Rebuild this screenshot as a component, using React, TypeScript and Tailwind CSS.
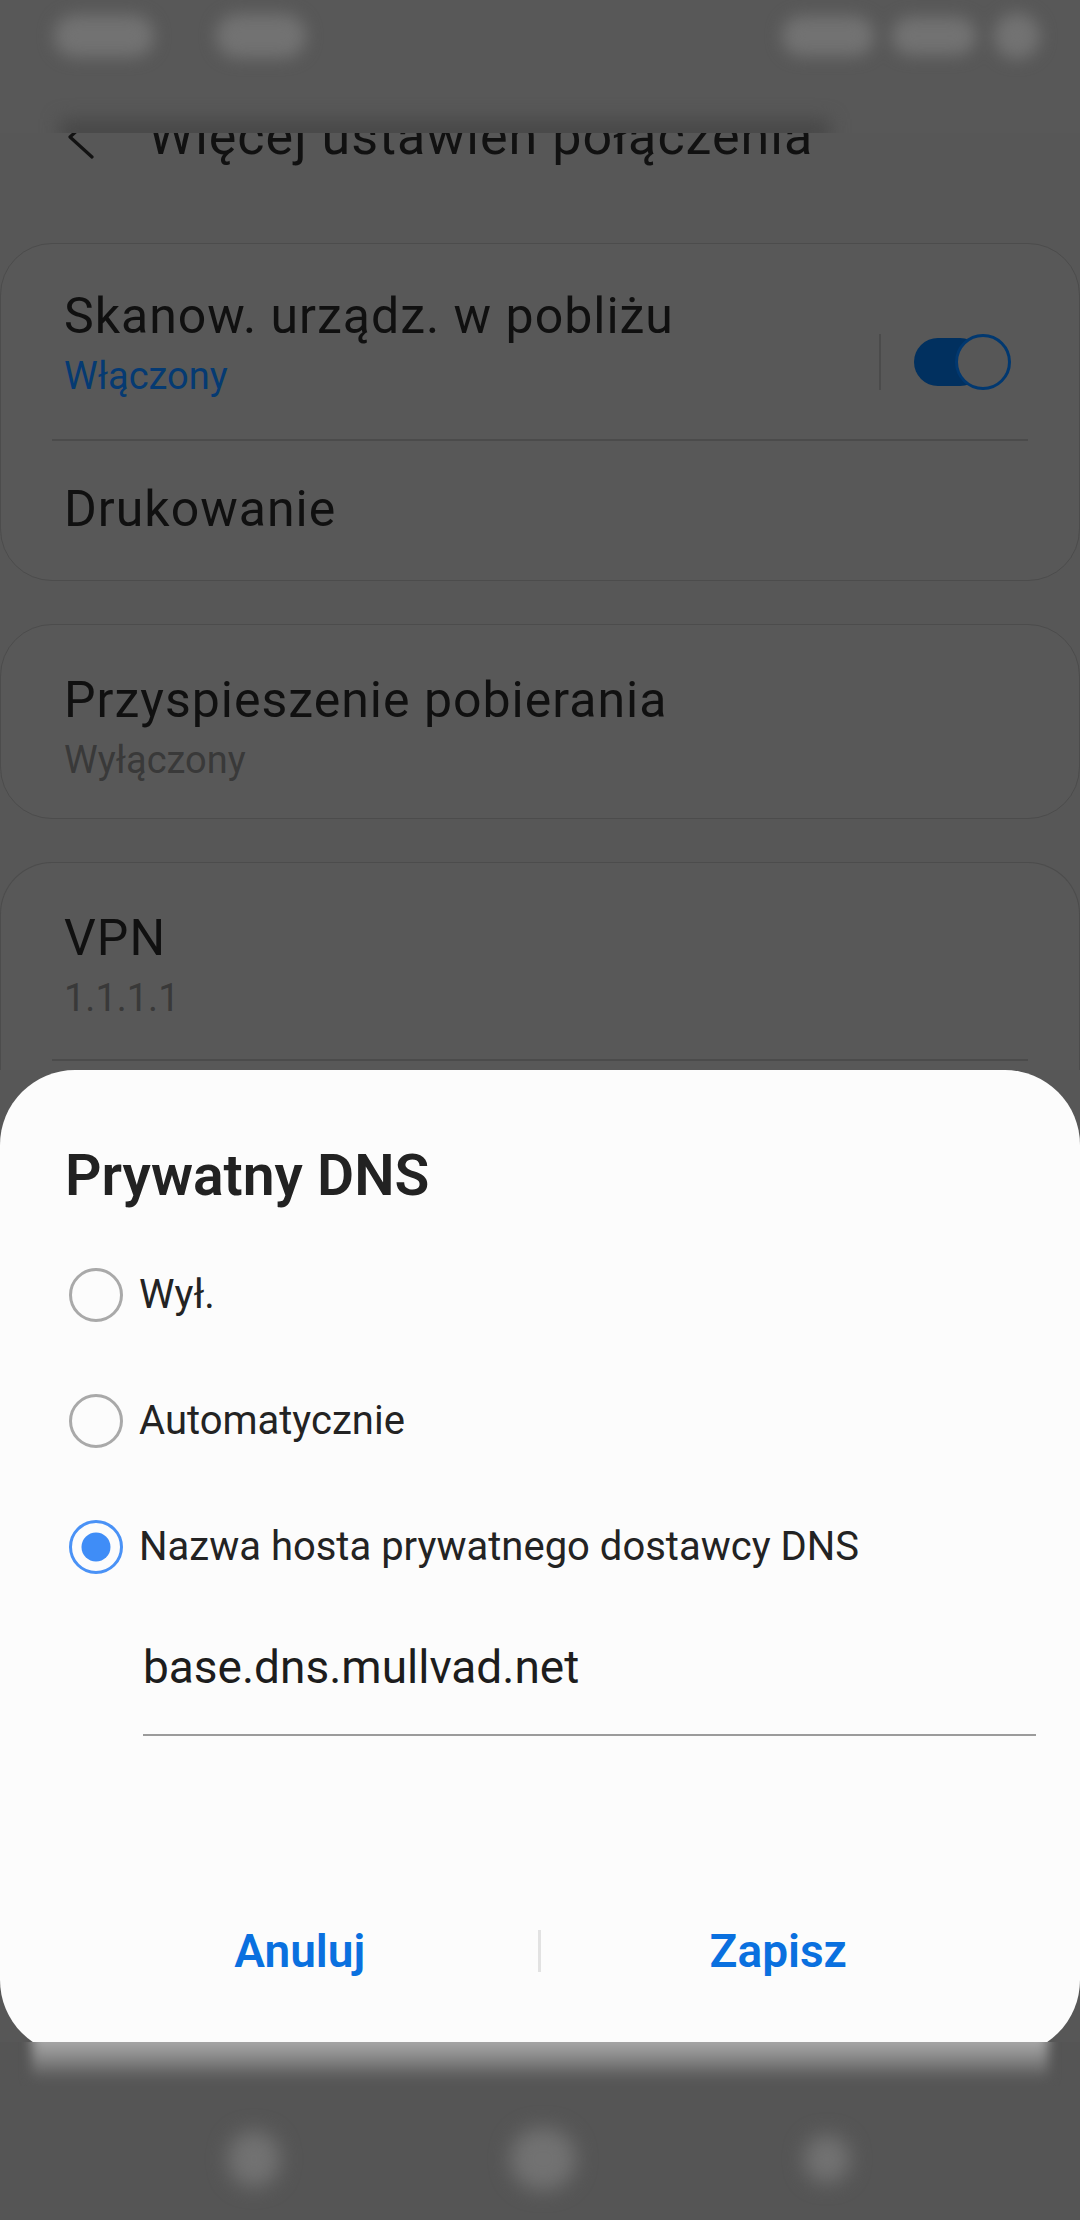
import { ReactNode } from "react";

const Blob = ({ className }: { className: string }) => (
  <div className={`shrink-0 rounded-full bg-[#727272] ${className}`} />
);

const Radio = ({ checked }: { checked?: boolean }) => (
  <svg width="54" height="54" viewBox="0 0 54 54" className="shrink-0">
    <circle
      cx="27"
      cy="27"
      r="25.5"
      fill="none"
      stroke={checked ? "#4a92f6" : "#a9a9a9"}
      strokeWidth="3"
    />
    {checked && <circle cx="27" cy="27" r="14.5" fill="#3f8df7" />}
  </svg>
);

const RadioRow = ({ label, checked }: { label: string; checked?: boolean }) => (
  <div className="h-[126px] flex items-center">
    <div className="ml-[4px] flex items-center">
      <Radio checked={checked} />
    </div>
    <span className="ml-[16px] text-[40px] leading-[48px] text-[#232323]">{label}</span>
  </div>
);

const Card = ({ children, className = "" }: { children: ReactNode; className?: string }) => (
  <div className={`shrink-0 border border-[#4c4c4c] bg-[#585858] ${className}`}>{children}</div>
);

const SettingText = ({
  title,
  sub,
  subColor = "text-[#393939]",
}: {
  title: string;
  sub?: string;
  subColor?: string;
}) => (
  <div className="flex flex-col">
    <span className="text-[50px] leading-[60px] tracking-[1px] text-[#101010]">{title}</span>
    {sub && <span className={`mt-[6px] text-[38px] leading-[48px] ${subColor}`}>{sub}</span>}
  </div>
);

export default function App() {
  return (
    <div className="w-[1080px] h-[2220px] bg-[#575757] flex flex-col overflow-hidden font-[Roboto,sans-serif]">
      {/* blurred status bar */}
      <div className="h-[133px] shrink-0 overflow-hidden flex flex-col bg-[#585858]">
        <div className="h-[72px] flex items-center justify-between pl-[54px] pr-[40px] blur-[8px]">
          <div className="flex items-center gap-[62px]">
            <Blob className="w-[100px] h-[42px]" />
            <Blob className="w-[90px] h-[44px]" />
          </div>
          <div className="flex items-center gap-[18px]">
            <Blob className="w-[92px] h-[40px]" />
            <Blob className="w-[84px] h-[38px]" />
            <Blob className="w-[46px] h-[46px]" />
          </div>
        </div>
        <div className="mt-auto ml-[60px] w-[770px] h-[26px] translate-y-[12px] bg-[#484848] blur-[9px]" />
      </div>

      {/* header, top part hidden under the status bar */}
      <div className="h-[110px] shrink-0 overflow-hidden flex items-start">
        <svg
          width="30"
          height="44"
          viewBox="0 0 30 44"
          className="ml-[66px] -mt-[18px] shrink-0"
          fill="none"
          stroke="#121212"
          strokeWidth="3.2"
          strokeLinecap="round"
          strokeLinejoin="round"
        >
          <path d="M26 2 L4 22 L26 42" />
        </svg>
        <span className="ml-[52px] -mt-[22px] text-[52px] leading-[52px] tracking-[1px] text-[#111111] whitespace-nowrap">
          Więcej ustawień połączenia
        </span>
      </div>

      {/* card 1 */}
      <Card className="h-[338px] rounded-[52px] flex flex-col">
        <div className="h-[195px] flex items-start pt-[42px] pl-[63px] pr-[68px]">
          <SettingText title="Skanow. urządz. w pobliżu" sub="Włączony" subColor="text-[#053a72]" />
          <div className="ml-auto self-center -mt-[2px] flex items-center">
            <div className="w-[2px] h-[56px] bg-[#4b4b4b]" />
            <div className="ml-[33px] flex items-center">
              <div className="w-[70px] h-[48px] rounded-full bg-[#01305f]" />
              <div className="-ml-[29px] w-[56px] h-[56px] rounded-full border-[3px] border-[#013870] bg-[#575757]" />
            </div>
          </div>
        </div>
        <div className="mx-[51px] h-[2px] bg-[#4b4b4b]" />
        <div className="flex-1 flex items-center pl-[63px] pb-[4px]">
          <span className="text-[50px] leading-[60px] tracking-[1px] text-[#101010]">Drukowanie</span>
        </div>
      </Card>

      {/* card 2 */}
      <Card className="mt-[43px] h-[195px] rounded-[52px] pt-[45px] pl-[63px]">
        <SettingText title="Przyspieszenie pobierania" sub="Wyłączony" />
      </Card>

      {/* card 3, continues under the dialog */}
      <Card className="mt-[43px] h-[208px] rounded-t-[52px] border-b-0 flex flex-col">
        <div className="pt-[45px] pl-[63px]">
          <SettingText title="VPN" sub="1.1.1.1" />
        </div>
        <div className="mt-auto mb-[9px] mx-[51px] h-[2px] bg-[#4b4b4b]" />
      </Card>

      {/* dialog */}
      <div className="h-[972px] shrink-0 overflow-hidden">
        <div className="h-[985px] rounded-[75px] bg-[#fcfcfc] flex flex-col pl-[65px] pr-[44px]">
          <span className="mt-[72px] text-[57px] leading-[68px] font-semibold text-[#222222]">
            Prywatny DNS
          </span>
          <div className="mt-[22px] flex flex-col">
            <RadioRow label="Wył." />
            <RadioRow label="Automatycznie" />
            <RadioRow label="Nazwa hosta prywatnego dostawcy DNS" checked />
          </div>
          <div className="ml-[78px] mt-[30px] flex flex-col">
            <span className="text-[46px] leading-[54px] text-[#1d1d1d]">base.dns.mullvad.net</span>
            <div className="mt-[40px] h-[2px] bg-[#9b9b9b]" />
          </div>
          <div className="mt-[165px] -ml-[3px] mr-[20px] h-[100px] flex items-center">
            <button className="flex-1 text-center text-[46px] leading-[100px] font-semibold text-[#0a70df]">
              Anuluj
            </button>
            <div className="w-[3px] h-[42px] bg-[#e2e2e2]" />
            <button className="flex-1 text-center text-[46px] leading-[100px] font-semibold text-[#0a70df]">
              Zapisz
            </button>
          </div>
        </div>
      </div>

      {/* blurred navigation bar */}
      <div className="flex-1 flex flex-col bg-[#555555] overflow-hidden">
        <div className="h-[44px] shrink-0 overflow-hidden">
          <div className="-mt-[12px] mx-[32px] h-[50px] bg-gradient-to-b from-[#bcbcbc] via-[#8e8e8e] to-[#555555] blur-[6px]" />
        </div>
        <div className="mt-[42px] flex items-center blur-[10px]">
          <Blob className="ml-[228px] w-[52px] h-[56px]" />
          <Blob className="ml-[230px] w-[66px] h-[62px]" />
          <Blob className="ml-[228px] w-[46px] h-[48px] bg-[#696969]" />
        </div>
      </div>
    </div>
  );
}
